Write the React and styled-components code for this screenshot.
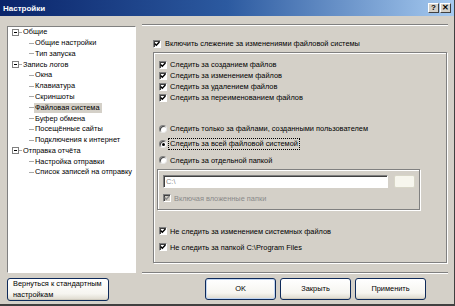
import React from 'react';
import styled, { createGlobalStyle, css } from 'styled-components';

const FONT = `"Liberation Sans", Arial, sans-serif`;
const FS = 7.4;

const Global = createGlobalStyle`
  html, body { margin: 0; padding: 0; background: #d4d0c8; }
  body { font-family: ${FONT}; font-size: ${FS}px; color: #000; }
  * { box-sizing: border-box; }
`;

const Window = styled.div`
  width: 455px;
  height: 306px;
  background: #d4d0c8;
  display: flex;
  flex-direction: column;
  border-right: 1px solid #404040;
  border-bottom: 2px solid #404040;
  overflow: hidden;
`;

const TitleBar = styled.div`
  height: 16px;
  flex: none;
  display: flex;
  align-items: center;
  padding: 0 3px 0 3px;
  background: linear-gradient(90deg, #0a246a 0%, #2c5aa0 50%, #a6caf0 100%);
`;

const TitleText = styled.div`
  color: #fff;
  font-weight: bold;
  font-size: 8px;
`;

const TitleButtons = styled.div`
  margin-left: auto;
  display: flex;
  gap: 1px;
`;

const TitleButton = styled.div`
  width: 11px;
  height: 10px;
  background: #d4d0c8;
  border: 1px solid;
  border-color: #fff #404040 #404040 #fff;
  display: flex;
  align-items: center;
  justify-content: center;
  font-weight: bold;
  font-size: 8px;
  line-height: 1;
  color: #000;
`;

const Main = styled.div`
  flex: 1;
  display: flex;
  flex-direction: column;
  padding: 8px 6px 0 7px;
`;

const Content = styled.div`
  display: flex;
  height: 249px;
`;

const TreePanel = styled.div`
  width: 129px;
  margin-top: 2px;
  height: 247px;
  background: #fff;
  border: 1px solid;
  border-color: #808080 #fff #fff #808080;
  padding-top: 0;
`;

const Row = styled.div`
  height: 10.77px;
  display: flex;
  align-items: center;
  white-space: nowrap;
  padding-left: ${p => p.$indent}px;
`;

const Expander = styled.span`
  width: 7px;
  height: 7px;
  flex: none;
  border: 1px solid #808080;
  background: #fff;
  display: flex;
  align-items: center;
  justify-content: center;
  &::after {
    content: '';
    width: 3px;
    height: 1px;
    background: #000;
  }
`;

const Dash = styled.span`
  width: ${p => p.$w}px;
  flex: none;
  border-top: 1px solid #a8a8a8;
`;

const Label = styled.span`
  padding: 0 2px 0 1px;
  line-height: 10px;
  ${p => p.$selected && css`
    background: #d4d0c8;
  `}
`;

const RightPane = styled.div`
  margin-left: 6px;
  flex: 1;
  border-top: 1px solid #808080;
  border-bottom: 1px solid #808080;
  box-shadow: inset 0 1px 0 #fff, 0 1px 0 #fff;
  padding: 13px 1px 0 11px;
  display: flex;
  flex-direction: column;
`;

const CheckRow = styled.label`
  display: flex;
  align-items: center;
  height: 11px;
  gap: ${p => p.$gap ?? 3}px;
  white-space: nowrap;
  color: ${p => (p.$disabled ? '#8a8a8a' : '#000')};
  margin-top: ${p => p.$mt ?? 0}px;
  margin-left: ${p => p.$ml ?? 0}px;
`;

const Box = styled.span`
  width: 8px;
  height: 8px;
  flex: none;
  background: ${p => (p.$disabled ? '#d4d0c8' : '#fff')};
  border: 1px solid;
  border-color: #808080 #fff #fff #808080;
  box-shadow: inset 1px 1px 0 #404040;
  display: flex;
  align-items: center;
  justify-content: center;
`;

const Radio = styled.span`
  width: 8px;
  height: 8px;
  flex: none;
  border-radius: 50%;
  background: #fff;
  border: 1px solid;
  border-color: #808080 #e8e8e8 #e8e8e8 #808080;
  box-shadow: inset 1px 1px 0 #404040;
  display: flex;
  align-items: center;
  justify-content: center;
  &::after {
    content: '';
    display: ${p => (p.$on ? 'block' : 'none')};
    width: 3px;
    height: 3px;
    border-radius: 50%;
    background: #000;
    margin: 1px 0 0 1px;
  }
`;

const Focus = styled.span`
  outline: 1px dotted #000;
  outline-offset: 0;
  padding: 0 1px;
  line-height: 10px;
`;

const GroupBox = styled.div`
  margin-top: ${p => p.$mt ?? 0}px;
  margin-left: ${p => p.$ml ?? 0}px;
  width: ${p => p.$w ? `${p.$w}px` : 'auto'};
  height: ${p => p.$h}px;
  border: 1px solid #808080;
  box-shadow: inset 1px 1px 0 #fff, 1px 1px 0 #fff;
  padding: ${p => p.$pad};
  display: flex;
  flex-direction: column;
`;

const PathRow = styled.div`
  display: flex;
  gap: 6px;
`;

const PathInput = styled.div`
  width: 225px;
  height: 13px;
  background: #fff;
  border: 1px solid;
  border-color: #808080 #fff #fff #808080;
  box-shadow: inset 1px 1px 0 #404040;
  color: #8a8a8a;
  padding-left: 2px;
  display: flex;
  align-items: center;
`;

const BrowseButton = styled.div`
  width: 21px;
  height: 13px;
  background: #f7f6ee;
  border: 1px solid #d8d6c8;
  border-radius: 2px;
`;

const Footer = styled.div`
  display: flex;
  align-items: flex-start;
  margin-top: 5px;
  padding-right: 22px;
`;

const XPButton = styled.button`
  font-family: ${FONT};
  font-size: ${FS}px;
  color: #000;
  width: ${p => p.$w}px;
  height: ${p => p.$h ?? 22}px;
  margin-left: ${p => p.$ml ?? 0}px;
  border: 1px solid #0e2a5a;
  border-radius: 3px;
  background: linear-gradient(#ffffff 0%, #f6f5f0 70%, #dcd8cc 100%);
  box-shadow: ${p => (p.$default ? 'inset 0 0 0 1px #c0d4f0' : 'inset 0 -1px 0 #d0ccc0')};
  padding: ${p => p.$pad ?? '0'};
  text-align: ${p => p.$align ?? 'center'};
  line-height: 10.5px;
`;

const Spacer = styled.div`
  flex: 1;
`;

const Check = () => (
  <svg width="6" height="6" viewBox="0 0 6 6">
    <path d="M0.6 2.6 L2.3 4.3 L5.4 1" fill="none" stroke="currentColor" strokeWidth="1.4" />
  </svg>
);

const CheckBox = ({ children, disabled, ...rest }) => (
  <CheckRow $disabled={disabled} {...rest}>
    <Box $disabled={disabled} style={{ color: disabled ? '#8a8a8a' : '#000' }}>
      <Check />
    </Box>
    <span>{children}</span>
  </CheckRow>
);

const tree = [
  { label: 'Общие', children: ['Общие настройки', 'Тип запуска'] },
  {
    label: 'Запись логов',
    children: ['Окна', 'Клавиатура', 'Скриншоты', 'Файловая система', 'Буфер обмена', 'Посещённые сайты', 'Подключения к интернет'],
  },
  { label: 'Отправка отчёта', children: ['Настройка отправки', 'Список записей на отправку'] },
];

export default function App() {
  return (
    <>
      <Global />
      <Window>
        <TitleBar>
          <TitleText>Настройки</TitleText>
          <TitleButtons>
            <TitleButton>?</TitleButton>
            <TitleButton>✕</TitleButton>
          </TitleButtons>
        </TitleBar>
        <Main>
          <Content>
            <TreePanel>
              {tree.map(node => (
                <React.Fragment key={node.label}>
                  <Row $indent={4}>
                    <Expander />
                    <Dash $w={3} />
                    <Label>{node.label}</Label>
                  </Row>
                  {node.children.map(c => (
                    <Row key={c} $indent={21}>
                      <Dash $w={5} />
                      <Label $selected={c === 'Файловая система'}>{c}</Label>
                    </Row>
                  ))}
                </React.Fragment>
              ))}
            </TreePanel>
            <RightPane>
              <CheckBox $gap={4}>Включить слежение за изменениями файловой системы</CheckBox>
              <GroupBox $mt={3} $h={211} $pad="6px 0 0 5px">
                <CheckBox>Следить за  созданием файлов</CheckBox>
                <CheckBox>Следить за изменением файлов</CheckBox>
                <CheckBox>Следить за  удалением файлов</CheckBox>
                <CheckBox>Следить за переименованием файлов</CheckBox>
                <CheckRow $mt={20}>
                  <Radio />
                  <span>Следить только за файлами, созданными пользователем</span>
                </CheckRow>
                <CheckRow $mt={4.5} $gap={2}>
                  <Radio $on />
                  <Focus>Следить за всей файловой системой</Focus>
                </CheckRow>
                <CheckRow $mt={5}>
                  <Radio />
                  <span>Следить за отдельной папкой</span>
                </CheckRow>
                <GroupBox $mt={3} $ml={-2} $w={263} $h={41} $pad="5px 0 0 5px">
                  <PathRow>
                    <PathInput>C:\</PathInput>
                    <BrowseButton />
                  </PathRow>
                  <CheckBox disabled $mt={5}>Включая вложенные папки</CheckBox>
                </GroupBox>
                <CheckBox $mt={16}>Не следить за изменением системных файлов</CheckBox>
                <CheckBox $mt={5}>Не следить за папкой C:\Program Files</CheckBox>
              </GroupBox>
            </RightPane>
          </Content>
          <Footer>
            <XPButton $w={102} $h={23} $align="left" $pad="0 0 0 5px">
              Вернуться к стандартным<br />настройкам
            </XPButton>
            <Spacer />
            <XPButton $w={71} $default>OK</XPButton>
            <XPButton $w={71} $ml={4}>Закрыть</XPButton>
            <XPButton $w={71} $ml={4}>Применить</XPButton>
          </Footer>
        </Main>
      </Window>
    </>
  );
}
